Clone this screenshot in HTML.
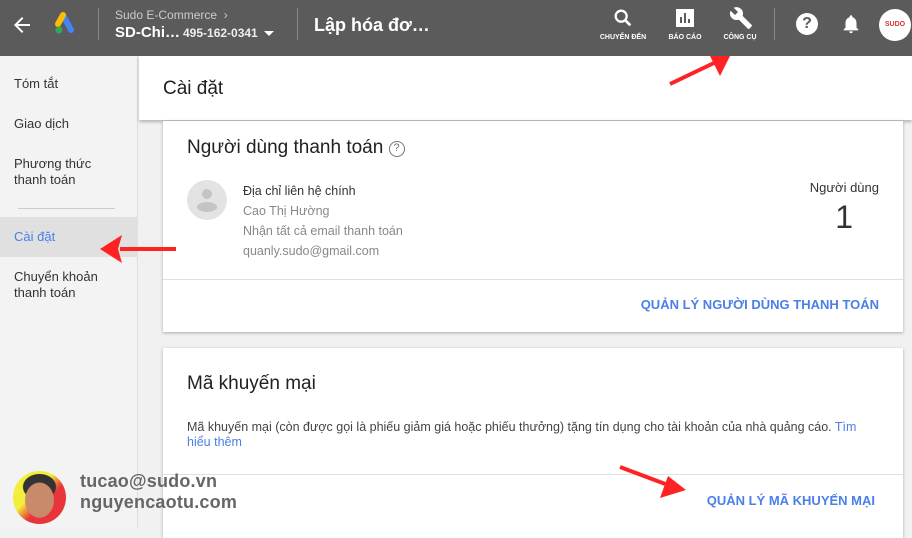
<!DOCTYPE html>
<html><head><meta charset="utf-8"><style>
*{margin:0;padding:0;box-sizing:border-box}
body{width:912px;height:527px;overflow:hidden;background:#f1f1f1;font-family:"Liberation Sans",sans-serif;position:relative;color:#212121}
.a{position:absolute;white-space:nowrap}
.top{position:absolute;left:0;top:0;width:912px;height:56px;background:#5b5b5b}
.side{position:absolute;left:0;top:56px;width:138px;height:471px;background:#f3f3f3;border-right:1px solid #ddd}
.nav{position:absolute;left:14px;font-size:13px;color:#333;line-height:16px}
.card{position:absolute;left:163px;width:740px;background:#fff;box-shadow:0 1px 3px rgba(0,0,0,.3)}
.tb{position:absolute;font-size:7px;font-weight:bold;color:#fff;text-align:center}
.link{color:#4a7fe8;font-size:13px;font-weight:bold;letter-spacing:0}
</style></head><body>
<div class="top"></div>
<svg class="a" style="left:10px;top:13px" width="24" height="24" viewBox="0 0 24 24"><path d="M20 11H7.8l5.6-5.6L12 4l-8 8 8 8 1.4-1.4L7.8 13H20z" fill="#fff"/></svg>
<svg class="a" style="left:54px;top:12px" width="26" height="24" viewBox="0 0 26 24"><path d="M9 3l8 15" stroke="#4285f4" stroke-width="6" stroke-linecap="round"/><path d="M9 3l-5 9" stroke="#fbbc04" stroke-width="6" stroke-linecap="round"/><circle cx="5" cy="18" r="3.5" fill="#34a853"/></svg>
<div class="a" style="left:98px;top:8px;width:1px;height:32px;background:#888"></div>
<div class="a" style="left:115px;top:8px;font-size:12px;color:#ccc">Sudo E-Commerce &nbsp;›</div>
<div class="a" style="left:115px;top:24px;font-size:15px;font-weight:bold;color:#fff">SD-Chi…</div>
<div class="a" style="left:183px;top:26px;font-size:12px;font-weight:bold;color:#eee">495-162-0341</div>
<div class="a" style="left:264px;top:31px;border:5px solid transparent;border-top-color:#fff"></div>
<div class="a" style="left:297px;top:8px;width:1px;height:32px;background:#888"></div>
<div class="a" style="left:314px;top:15px;font-size:18px;font-weight:bold;color:#fff">Lập hóa đơ…</div>
<svg class="a" style="left:612px;top:7px" width="22" height="22" viewBox="0 0 24 24"><circle cx="10" cy="10" r="6" stroke="#fff" stroke-width="2.5" fill="none"/><path d="M14 14l6 6" stroke="#fff" stroke-width="3"/></svg>
<div class="tb" style="left:593px;top:34px;width:60px">CHUYỂN ĐẾN</div>
<svg class="a" style="left:675px;top:8px" width="20" height="20" viewBox="0 0 20 20"><rect x="1" y="1" width="18" height="18" fill="#fff"/><path d="M6 15V9M10 15V5M14 15v-4" stroke="#5b5b5b" stroke-width="2"/></svg>
<div class="tb" style="left:660px;top:34px;width:50px">BÁO CÁO</div>
<svg class="a" style="left:728px;top:6px" width="26" height="24" viewBox="0 0 24 24"><path d="M22.7 19l-9.1-9.1c.9-2.3.4-5-1.5-6.9-2-2-5-2.4-7.4-1.3L9 6 6 9 1.6 4.7C.4 7.1.9 10.1 2.9 12.1c1.9 1.9 4.6 2.4 6.9 1.5l9.1 9.1c.4.4 1 .4 1.4 0l2.3-2.3c.5-.4.5-1.1.1-1.4z" fill="#fff"/></svg>
<div class="tb" style="left:715px;top:34px;width:50px">CÔNG CỤ</div>
<div class="a" style="left:774px;top:8px;width:1px;height:32px;background:#888"></div>
<div class="a" style="left:796px;top:13px;width:22px;height:22px;border-radius:50%;background:#fff;color:#5b5b5b;font-weight:bold;font-size:16px;text-align:center;line-height:22px">?</div>
<svg class="a" style="left:840px;top:12px" width="22" height="24" viewBox="0 0 24 24"><path d="M12 22c1.1 0 2-.9 2-2h-4c0 1.1.9 2 2 2zm6-6v-5c0-3.1-1.6-5.6-4.5-6.3V4c0-.8-.7-1.5-1.5-1.5S10.5 3.2 10.5 4v.7C7.6 5.4 6 7.9 6 11v5l-2 2v1h16v-1l-2-2z" fill="#fff"/></svg>
<div class="a" style="left:879px;top:9px;width:32px;height:32px;border-radius:50%;background:#fff;font-size:7px;font-weight:bold;color:#d33;text-align:center;line-height:32px">SUDO</div>

<div class="side"></div>
<div class="nav" style="top:76px">Tóm tắt</div>
<div class="nav" style="top:116px">Giao dịch</div>
<div class="nav" style="top:156px">Phương thức<br>thanh toán</div>
<div class="a" style="left:18px;top:208px;width:97px;height:1px;background:#ccc"></div>
<div class="a" style="left:0;top:217px;width:138px;height:40px;background:#e0e0e0"></div>
<div class="nav" style="top:229px;color:#4a7fe8">Cài đặt</div>
<div class="nav" style="top:269px">Chuyển khoản<br>thanh toán</div>

<div class="a" style="left:139px;top:56px;width:773px;height:64px;background:#fff;box-shadow:0 2px 3px rgba(0,0,0,.25)"></div>
<div class="a" style="left:163px;top:78px;font-size:19px;color:#212121">Cài đặt</div>

<div class="card" style="top:121px;height:211px">
<div class="a" style="left:24px;top:16px;font-size:19px">Người dùng thanh toán <span style="display:inline-block;width:16px;height:16px;border:1.5px solid #777;border-radius:50%;font-size:11px;color:#777;text-align:center;line-height:13px;vertical-align:2px">?</span></div>
<svg class="a" style="left:24px;top:59px" width="40" height="40"><circle cx="20" cy="20" r="20" fill="#e3e3e3"/><circle cx="20" cy="14" r="5" fill="#c4c4c4"/><ellipse cx="20" cy="27" rx="10" ry="5" fill="#c4c4c4"/></svg>
<div class="a" style="left:80px;top:60px;font-size:12.5px;line-height:20px;color:#888"><span style="color:#333">Địa chỉ liên hệ chính</span><br>Cao Thị Hường<br>Nhận tất cả email thanh toán<br>quanly.sudo@gmail.com</div>
<div class="a" style="right:24px;top:59px;font-size:13px;color:#333">Người dùng</div>
<div class="a" style="right:50px;top:78px;font-size:32px;color:#333">1</div>
<div class="a" style="left:0;top:158px;width:740px;height:1px;background:#e0e0e0"></div>
<div class="a link" style="right:24px;top:176px">QUẢN LÝ NGƯỜI DÙNG THANH TOÁN</div>
</div>

<div class="card" style="top:348px;height:190px">
<div class="a" style="left:24px;top:25px;font-size:19px">Mã khuyến mại</div>
<div class="a" style="left:24px;top:72px;font-size:12.5px;line-height:15px;color:#444;white-space:normal;width:692px">Mã khuyến mại (còn được gọi là phiếu giảm giá hoặc phiếu thưởng) tặng tín dụng cho tài khoản của nhà quảng cáo. <span style="color:#4a7fe8">Tìm hiểu thêm</span></div>
<div class="a" style="left:0;top:126px;width:740px;height:1px;background:#e0e0e0"></div>
<div class="a link" style="right:28px;top:145px">QUẢN LÝ MÃ KHUYẾN MẠI</div>
</div>

<svg class="a" style="left:0;top:0" width="912" height="527">
<g stroke="#f22" stroke-width="4" fill="#f22">
<path d="M670 84L716 62"/><path d="M730 56l-20 0 10 20z" stroke="none"/>
<path d="M176 249H120"/><path d="M100 249l22-14-4 14 4 14z" stroke="none"/>
<path d="M620 467L668 485"/><path d="M686 490l-26 8 8-22z" stroke="none"/>
</g></svg>

<div class="a" style="left:13px;top:471px;width:53px;height:53px;border-radius:50%;background:radial-gradient(ellipse 28% 34% at 50% 55%,#c88a6a 0 95%,transparent 100%),radial-gradient(ellipse 32% 25% at 50% 30%,#333 0 95%,transparent 100%),linear-gradient(135deg,#f3ee3a 40%,#e8343a 60%)"></div>
<div class="a" style="left:80px;top:471px;font-size:18px;font-weight:bold;color:#666;line-height:21px;letter-spacing:.2px">tucao@sudo.vn<br>nguyencaotu.com</div>
</body></html>
